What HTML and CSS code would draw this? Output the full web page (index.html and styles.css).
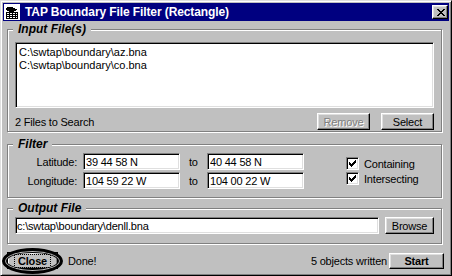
FILE: index.html
```html
<!DOCTYPE html>
<html lang="en">
<head>
    <meta charset="UTF-8">
    <title>TAP Boundary File Filter (Rectangle)</title>
    <link rel="stylesheet" href="styles.css">
</head>
<body>
    <div class="window">
        <!-- title bar -->
        <div class="titlebar">
            <svg class="app-icon" width="16" height="16" viewBox="0 0 16 16" shape-rendering="crispEdges">
                <rect x="0" y="0" width="16" height="16" fill="#fff"/>
                <path d="M3 3h6v1h2v1h2v1h-1v1h-2v1H5V7H3V6H2V4h1z" fill="#000"/>
                <path d="M2 8h12v7H2z" fill="#000"/>
                <path d="M3 9h10v1H3zM3 11h10v1H3zM3 13h10v1H3z" fill="#fff"/>
                <path d="M5 9h1v5H5zM8 9h1v5H8zM11 9h1v5h-1z" fill="#000"/>
            </svg>
            <span class="title">TAP Boundary File Filter (Rectangle)</span>
            <button class="title-close">
                <svg width="8" height="7" viewBox="0 0 8 7" shape-rendering="crispEdges">
                    <path d="M0 0h2v1H0zM6 0h2v1H6zM1 1h2v1H1zM5 1h2v1H5zM2 2h4v1H2zM3 3h2v1H3zM2 4h4v1H2zM1 5h2v1H1zM5 5h2v1H5zM0 6h2v1H0zM6 6h2v1H6z" fill="#000"/>
                </svg>
            </button>
        </div>

        <!-- input files -->
        <div class="group group-input">
            <span class="group-label">Input File(s)</span>
            <div class="listbox">
                <div class="list-item">C:\swtap\boundary\az.bna</div>
                <div class="list-item">C:\swtap\boundary\co.bna</div>
            </div>
            <div class="list-footer">
                <span class="count">2 Files to Search</span>
                <button class="btn" disabled>Remove</button>
                <button class="btn">Select</button>
            </div>
        </div>

        <!-- filter -->
        <div class="group group-filter">
            <span class="group-label">Filter</span>
            <div class="coords">
                <div class="coord-row">
                    <label class="coord-label">Latitude:</label>
                    <input class="field" type="text" value="39 44 58 N">
                    <span class="to">to</span>
                    <input class="field" type="text" value="40 44 58 N">
                </div>
                <div class="coord-row">
                    <label class="coord-label">Longitude:</label>
                    <input class="field" type="text" value="104 59 22 W">
                    <span class="to">to</span>
                    <input class="field" type="text" value="104 00 22 W">
                </div>
            </div>
            <div class="checks">
                <div class="check-row">
                    <span class="checkbox">
                        <svg width="7" height="7" viewBox="0 0 7 7" shape-rendering="crispEdges"><path d="M6 0h1v3H6zM5 1h1v3H5zM4 2h1v3H4zM0 2h1v3H0zM1 3h1v3H1zM3 3h1v3H3zM2 4h1v3H2z" fill="#000"/></svg>
                    </span>
                    <span>Containing</span>
                </div>
                <div class="check-row">
                    <span class="checkbox">
                        <svg width="7" height="7" viewBox="0 0 7 7" shape-rendering="crispEdges"><path d="M6 0h1v3H6zM5 1h1v3H5zM4 2h1v3H4zM0 2h1v3H0zM1 3h1v3H1zM3 3h1v3H3zM2 4h1v3H2z" fill="#000"/></svg>
                    </span>
                    <span>Intersecting</span>
                </div>
            </div>
        </div>

        <!-- output file -->
        <div class="group group-output">
            <span class="group-label">Output File</span>
            <input class="field field-wide" type="text" value="c:\swtap\boundary\denll.bna">
            <button class="btn btn-browse">Browse</button>
        </div>

        <!-- bottom bar -->
        <div class="bottom-bar">
            <button class="btn btn-close">
                <span class="ring"></span>
                <span class="focus">Close</span>
            </button>
            <span class="done">Done!</span>
            <span class="written">5 objects written</span>
            <button class="btn btn-start">Start</button>
        </div>
    </div>
</body>
</html>
```

FILE: styles.css
```css
* {
    margin: 0;
    padding: 0;
    box-sizing: border-box;
}
body {
    font-family: "Liberation Sans", Arial, sans-serif;
    font-size: 11px;
    letter-spacing: -0.2px;
    color: #000;
    background: #c0c0c0;
}
.window {
    width: 452px;
    height: 276px;
    padding: 2px;
    background: #c0c0c0;
    border: 1px solid;
    border-color: #dfdfdf #000 #000 #dfdfdf;
    box-shadow: inset 1px 1px #fff, inset -1px -1px #808080;
}

/* title bar */
.titlebar {
    display: flex;
    align-items: center;
    height: 18px;
    padding: 0 1px 0 1px;
    background: #000080;
    color: #fff;
}
.app-icon {
    margin-right: 5px;
}
.title {
    flex: 1;
    font-size: 12px;
    font-weight: bold;
    letter-spacing: -0.1px;
}
.title-close {
    display: flex;
    align-items: center;
    justify-content: center;
    width: 16px;
    height: 14px;
    padding-left: 1px;
    background: #c0c0c0;
    border: 1px solid;
    border-color: #fff #000 #000 #fff;
    box-shadow: inset -1px -1px #808080, inset 1px 1px #dfdfdf;
}

/* group boxes */
.group {
    position: relative;
    width: 435px;
    margin-left: 4px;
    border: 1px solid #808080;
    box-shadow: inset 1px 1px #fff, 1px 1px #fff;
}
.group-label {
    position: absolute;
    top: -8px;
    left: 5px;
    padding: 0 5px;
    background: #c0c0c0;
    font: italic bold 12px/14px "Liberation Sans", Arial, sans-serif;
    letter-spacing: 0;
}
.group-input {
    margin-top: 8px;
    padding: 12px 7px 1px;
}
.group-filter {
    display: flex;
    margin-top: 12px;
    padding: 8px 0;
}
.group-output {
    display: flex;
    align-items: center;
    margin-top: 10px;
    padding: 8px 7px 9px;
}

/* list */
.listbox {
    height: 66px;
    padding: 3px 3px;
    background: #fff;
    border: 1px solid;
    border-color: #808080 #fff #fff #808080;
    box-shadow: inset 1px 1px #000, inset -1px -1px #dfdfdf;
}
.list-item {
    line-height: 13px;
    letter-spacing: 0;
}
.list-footer {
    display: flex;
    align-items: center;
    height: 17px;
    margin-top: 5px;
}
.count {
    flex: 1;
}
.list-footer .btn {
    width: 53px;
}
.list-footer .btn + .btn {
    margin-left: 11px;
}

/* buttons */
.btn {
    height: 17px;
    font: inherit;
    letter-spacing: inherit;
    color: #000;
    background: #c0c0c0;
    border: 1px solid;
    border-color: #fff #000 #000 #fff;
    box-shadow: inset -1px -1px #808080, inset 1px 1px #dfdfdf;
}
.btn:disabled {
    color: #808080;
    text-shadow: 1px 1px #fff;
}

/* fields */
.field {
    width: 97px;
    height: 17px;
    padding: 0 1px 0 2px;
    font: inherit;
    letter-spacing: inherit;
    color: #000;
    background: #fff;
    border: 1px solid;
    border-color: #808080 #fff #fff #808080;
    box-shadow: inset 1px 1px #000, inset -1px -1px #dfdfdf;
    outline: none;
}
.field-wide {
    flex: 1;
    padding-left: 1px;
}
.btn-browse {
    width: 49px;
    margin-left: 6px;
}

/* filter rows */
.coords {
    display: flex;
    flex-direction: column;
    gap: 2px;
}
.coord-row {
    display: flex;
    align-items: center;
    height: 17px;
}
.coord-label {
    width: 69px;
    margin-right: 6px;
    text-align: right;
}
.to {
    width: 27px;
    padding-left: 9px;
}
.checks {
    align-self: center;
    margin-left: 42px;
}
.check-row {
    display: flex;
    align-items: center;
    height: 15px;
}
.checkbox {
    display: flex;
    align-items: center;
    justify-content: center;
    width: 13px;
    height: 13px;
    margin-right: 5px;
    background: #fff;
    border: 1px solid;
    border-color: #808080 #fff #fff #808080;
    box-shadow: inset 1px 1px #000, inset -1px -1px #dfdfdf;
}

/* bottom bar */
.bottom-bar {
    display: flex;
    align-items: center;
    height: 17px;
    margin-top: 8px;
    padding: 0 5px 0 4px;
}
.btn-close {
    position: relative;
    width: 51px;
    font-weight: bold;
    border-color: #000;
    box-shadow: inset 1px 1px #fff, inset -1px -1px #808080;
}
.btn-close .focus {
    padding: 0 3px;
    outline: 1px dotted #000;
}
.ring {
    position: absolute;
    left: -6px;
    top: -5px;
    width: 61px;
    height: 26px;
    border: 3px solid #000;
    border-radius: 50%;
    box-shadow: inset 0 0 0 1px #c0c0c0, inset 0 0 0 2px #000;
}
.done {
    margin-left: 10px;
}
.written {
    margin-left: auto;
    margin-right: 2px;
}
.btn-start {
    width: 55px;
    height: 16px;
    font-weight: bold;
}
```
